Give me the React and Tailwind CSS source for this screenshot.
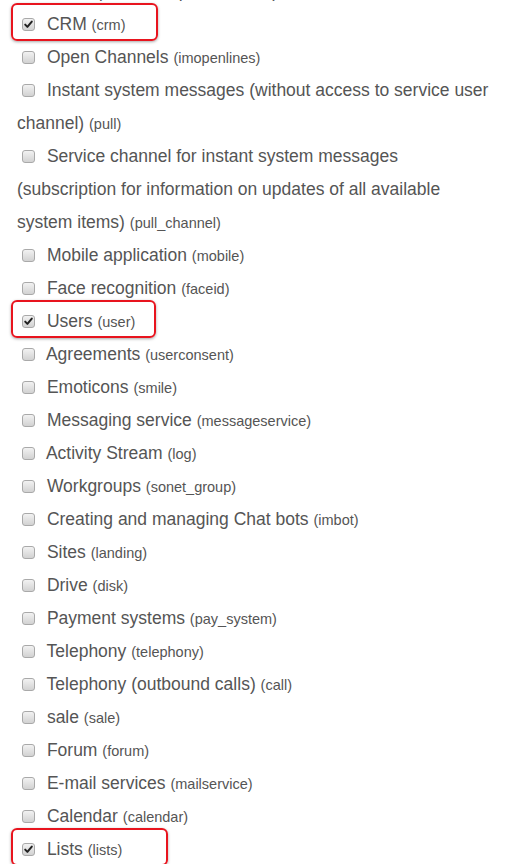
import React from 'react'

const items = [
  { label: 'Tasks (extended permissions)', code: 'tasks_extended' },
  { label: 'CRM', code: 'crm', checked: true, mark: 'w-[147px]' },
  { label: 'Open Channels', code: 'imopenlines' },
  { label: 'Instant system messages (without access to service user channel)', code: 'pull' },
  {
    label:
      'Service channel for instant system messages (subscription for information on updates of all available system items)',
    code: 'pull_channel',
  },
  { label: 'Mobile application', code: 'mobile' },
  { label: 'Face recognition', code: 'faceid' },
  { label: 'Users', code: 'user', checked: true, mark: 'w-[145px]' },
  { label: 'Agreements', code: 'userconsent' },
  { label: 'Emoticons', code: 'smile' },
  { label: 'Messaging service', code: 'messageservice' },
  { label: 'Activity Stream', code: 'log' },
  { label: 'Workgroups', code: 'sonet_group' },
  { label: 'Creating and managing Chat bots', code: 'imbot' },
  { label: 'Sites', code: 'landing' },
  { label: 'Drive', code: 'disk' },
  { label: 'Payment systems', code: 'pay_system' },
  { label: 'Telephony', code: 'telephony' },
  { label: 'Telephony (outbound calls)', code: 'call' },
  { label: 'sale', code: 'sale' },
  { label: 'Forum', code: 'forum' },
  { label: 'E-mail services', code: 'mailservice' },
  { label: 'Calendar', code: 'calendar' },
  { label: 'Lists', code: 'lists', checked: true, mark: 'w-[157px]' },
]

function Box({ checked }) {
  return (
    <span className="inline-block align-[-1px] leading-none ml-[5px] mr-[7px] w-[13px] h-[13px] rounded-[3px] border border-[#a9a9a9] bg-gradient-to-b from-[#f2f2f2] to-[#d2d2d2] relative">
      {checked && (
        <svg viewBox="0 0 13 13" className="absolute -left-px -top-px w-[13px] h-[13px]">
          <path d="M3.2 6.6 L5.4 8.9 L9.8 3.6" fill="none" stroke="#222" strokeWidth="2" strokeLinecap="round" strokeLinejoin="round" />
        </svg>
      )}
    </span>
  )
}

export default function App() {
  return (
    <div className="bg-white min-h-screen overflow-hidden font-['Liberation_Sans',Arial,sans-serif] text-[#555]">
      <div className="pl-[17px] w-[495px] -mt-[25px]">
        {items.map((it) => (
          <div key={it.code} className="relative text-[17.5px] leading-[33px]">
            {it.mark && (
              <span className={`absolute -left-[6px] -top-[5px] h-[38px] ${it.mark} rounded-[6px] border-2 border-[#e8141e] shadow-[0_1px_3px_rgba(0,0,0,0.35)]`} />
            )}
            <Box checked={it.checked} /> {it.label}{' '}
            <span className="text-[14.5px] leading-none">({it.code})</span>
          </div>
        ))}
      </div>
    </div>
  )
}
